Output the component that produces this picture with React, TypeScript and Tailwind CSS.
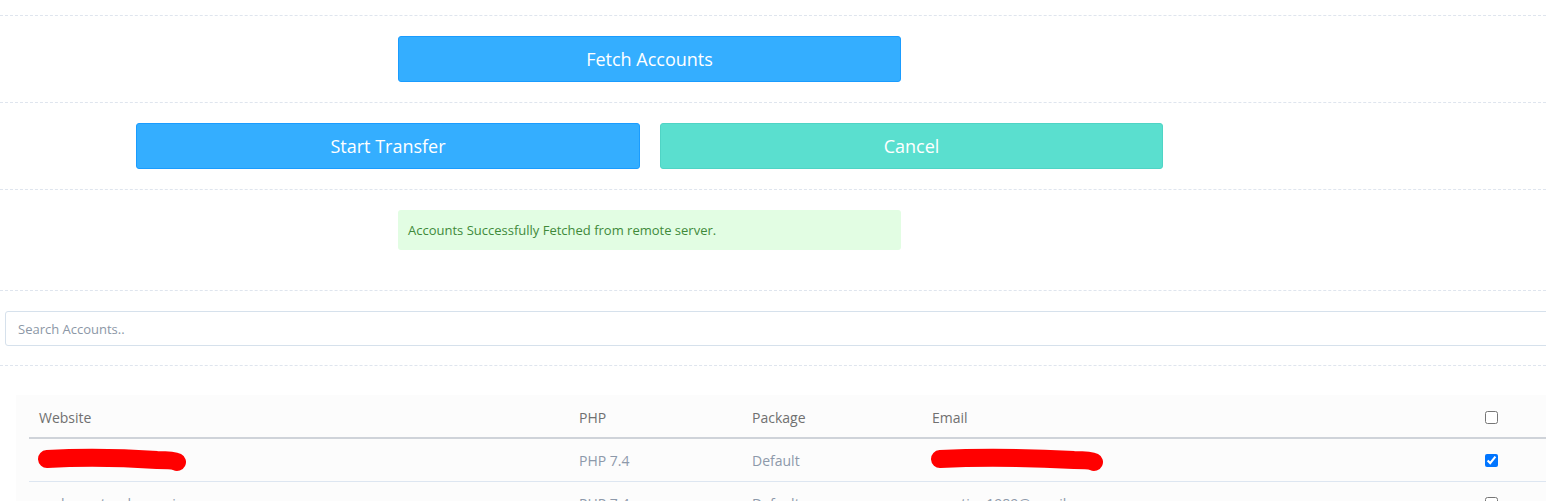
import React from 'react';

type Row = {
  site: string;
  php: string;
  pkg: string;
  email: string;
  checked: boolean;
  hidden?: boolean;
};

const rows: Row[] = [
  { site: '', php: 'PHP 7.4', pkg: 'Default', email: '', checked: true, hidden: true },
  { site: 'cuubocoatoodongnai.com', php: 'PHP 7.4', pkg: 'Default', email: 'congtien1989@gmail.com', checked: false },
];

// red marker strokes covering private values
const Scribble = ({ width }: { width: number }) => (
  <svg width={width} height="26" viewBox={`0 0 ${width} 26`} className="block">
    <path
      d={`M10 12 C ${width * 0.3} 10, ${width * 0.6} 11, ${width - 30} 13 C ${width - 18} 13, ${width - 12} 14, ${width - 10} 15`}
      stroke="#ff0000"
      strokeWidth="18"
      strokeLinecap="round"
      fill="none"
    />
  </svg>
);

const Section = ({ className, children }: { className: string; children: React.ReactNode }) => (
  <div className={`border-t border-dashed border-[#dfe5ee] ${className}`}>{children}</div>
);

export default function App() {
  return (
    <div className="w-[1546px] h-[501px] overflow-hidden bg-white pt-[15px] font-['Open_Sans',sans-serif]">
      <Section className="pt-[20px] pb-[20px]">
        <div className="pl-[398px]">
          <button className="w-[503px] h-[46px] rounded-[3px] border border-[#1a9cff] bg-[#34aeff] text-[18px] text-white">
            Fetch Accounts
          </button>
        </div>
      </Section>

      <Section className="pt-[20px] pb-[20px]">
        <div className="flex gap-[20px] pl-[136px]">
          <button className="w-[504px] h-[46px] rounded-[3px] border border-[#1a9cff] bg-[#34aeff] text-[18px] text-white">
            Start Transfer
          </button>
          <button className="w-[503px] h-[46px] rounded-[3px] border border-[#4fd4c5] bg-[#5adfcf] text-[18px] text-white">
            Cancel
          </button>
        </div>
      </Section>

      <Section className="pt-[20px] pb-[40px]">
        <div className="ml-[398px] w-[503px] h-[40px] rounded-[3px] bg-[#e2fde3] px-[10px] pt-[1px] flex items-center text-[13px] text-[#3f8a3a]">
          Accounts Successfully Fetched from remote server.
        </div>
      </Section>

      <Section className="pt-[20px] pb-[19px]">
        <div className="pl-[5px]">
          <input
            type="text"
            placeholder="Search Accounts.."
            className="w-[1560px] h-[35px] rounded-[3px] border border-[#d6e1ec] px-[12px] text-[13px] text-[#555] placeholder:text-[#8c97a6] outline-none"
          />
        </div>
      </Section>

      <Section className="pt-[29px]">
        <div className="ml-[16px] bg-[#fcfcfc] pl-[13px] pb-[20px]">
          <div className="grid grid-cols-[540px_173px_180px_553px_80px] h-[44px] pt-[2px] items-center border-b-2 border-[#cfd3d9] text-[14px] text-[#707070]">
            <div className="pl-[10px]">Website</div>
            <div className="pl-[10px]">PHP</div>
            <div className="pl-[10px]">Package</div>
            <div className="pl-[10px]">Email</div>
            <div className="pl-[10px] flex items-center">
              <input type="checkbox" className="w-[13px] h-[13px] m-0" />
            </div>
          </div>
          {rows.map((r, i) => (
            <div
              key={i}
              className="grid grid-cols-[540px_173px_180px_553px_80px] h-[43px] items-center border-b border-[#dde6f1] text-[14px] text-[#8d99aa]"
            >
              <div className="pl-[8px]">{r.hidden ? <Scribble width={150} /> : r.site}</div>
              <div className="pl-[10px]">{r.php}</div>
              <div className="pl-[10px]">{r.pkg}</div>
              <div className="pl-[8px]">{r.hidden ? <Scribble width={174} /> : r.email}</div>
              <div className="pl-[10px] flex items-center">
                <input type="checkbox" defaultChecked={r.checked} className="w-[13px] h-[13px] m-0" />
              </div>
            </div>
          ))}
        </div>
      </Section>
    </div>
  );
}
